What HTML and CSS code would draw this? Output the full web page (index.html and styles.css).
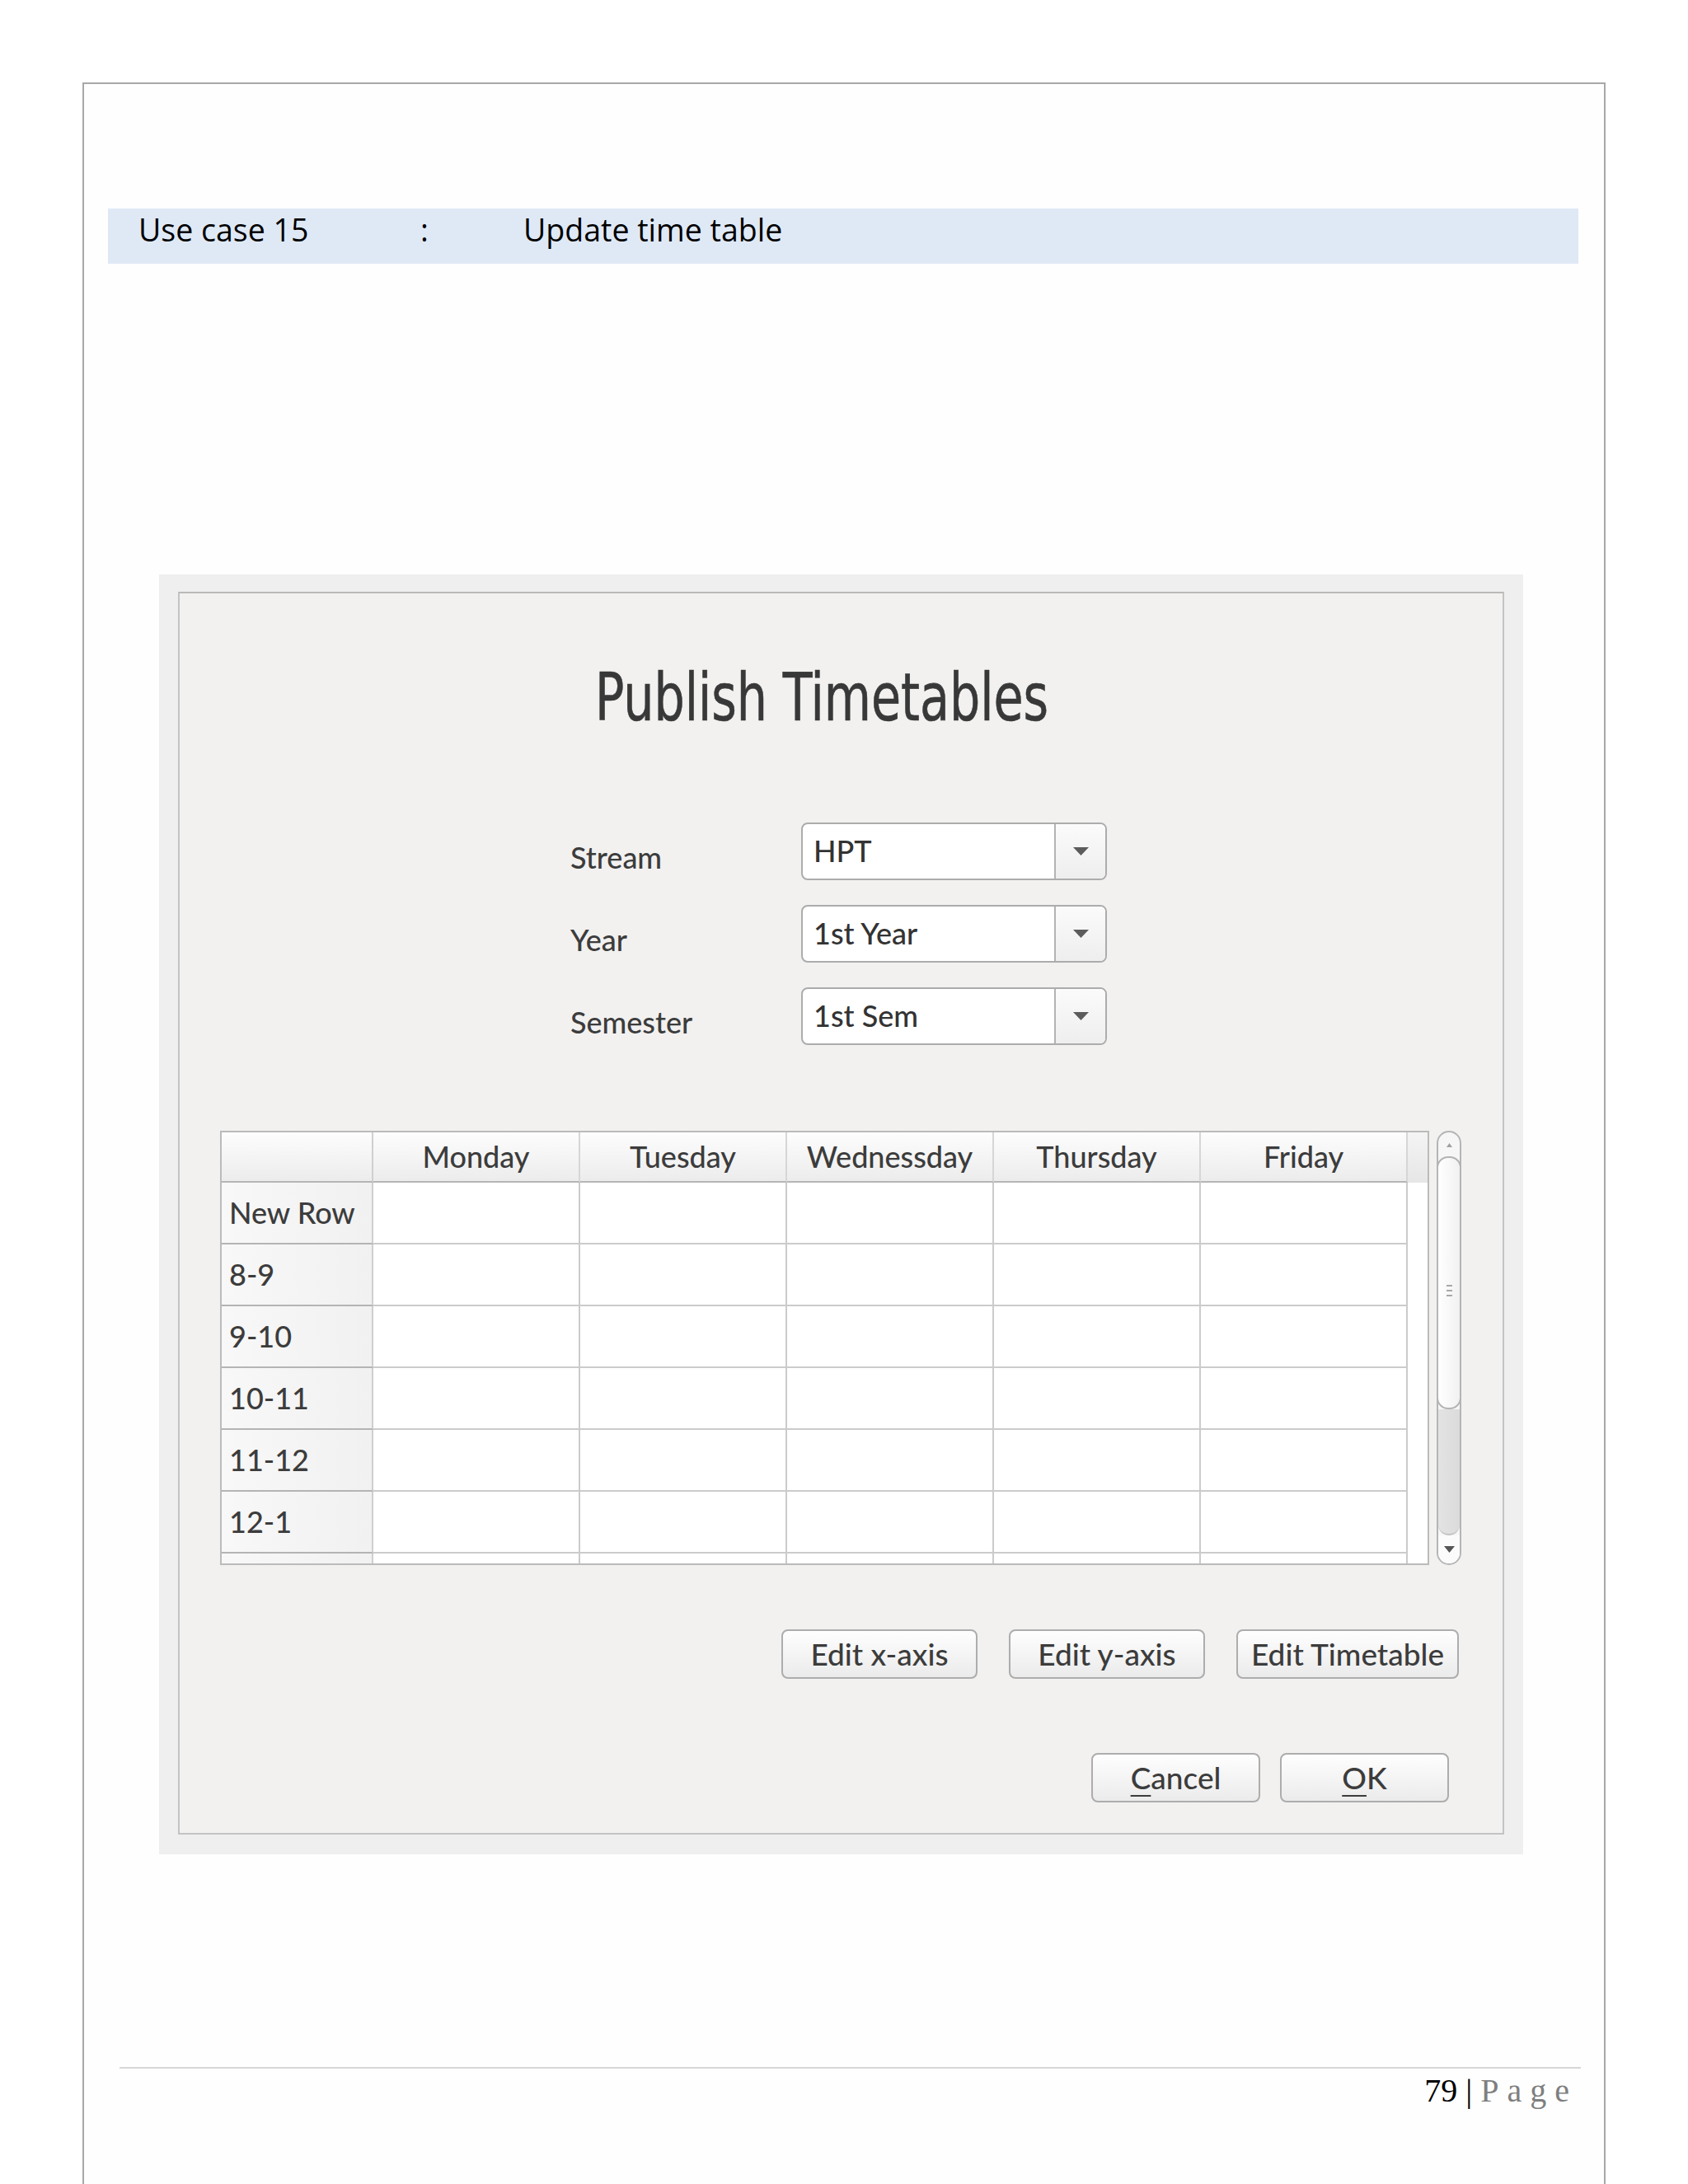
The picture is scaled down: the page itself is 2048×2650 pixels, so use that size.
FILE: index.html
```html
<!DOCTYPE html>
<html>
<head>
<meta charset="utf-8">
<title>Use case 15 - Update time table</title>
<link rel="stylesheet" href="styles.css">
</head>
<body>
<div class="page">
  <div class="band">
    <span class="b-label">Use case 15</span><span class="b-colon">:</span><span class="b-value">Update time table</span>
  </div>

  <div class="shot">
    <div class="panel">
      <h1 class="title"><span class="title-text">Publish Timetables</span></h1>

      <div class="form">
        <div class="label">Stream</div>
        <div class="combo"><span class="combo-text">HPT</span><span class="combo-btn"><svg width="19" height="10" viewBox="0 0 19 10"><polygon points="0,0 19,0 9.5,10" fill="#5c5c5c"/></svg></span></div>
        <div class="label">Year</div>
        <div class="combo"><span class="combo-text">1st Year</span><span class="combo-btn"><svg width="19" height="10" viewBox="0 0 19 10"><polygon points="0,0 19,0 9.5,10" fill="#5c5c5c"/></svg></span></div>
        <div class="label">Semester</div>
        <div class="combo"><span class="combo-text">1st Sem</span><span class="combo-btn"><svg width="19" height="10" viewBox="0 0 19 10"><polygon points="0,0 19,0 9.5,10" fill="#5c5c5c"/></svg></span></div>
      </div>

      <div class="table-area">
        <div class="grid">
          <div class="hc corner"></div>
          <div class="hc">Monday</div>
          <div class="hc">Tuesday</div>
          <div class="hc">Wednessday</div>
          <div class="hc">Thursday</div>
          <div class="hc">Friday</div>
          <div class="hf"></div>

          <div class="rh">New Row</div><div class="c"></div><div class="c"></div><div class="c"></div><div class="c"></div><div class="c"></div><div class="bf"></div>
          <div class="rh">8-9</div><div class="c"></div><div class="c"></div><div class="c"></div><div class="c"></div><div class="c"></div><div class="bf"></div>
          <div class="rh">9-10</div><div class="c"></div><div class="c"></div><div class="c"></div><div class="c"></div><div class="c"></div><div class="bf"></div>
          <div class="rh">10-11</div><div class="c"></div><div class="c"></div><div class="c"></div><div class="c"></div><div class="c"></div><div class="bf"></div>
          <div class="rh">11-12</div><div class="c"></div><div class="c"></div><div class="c"></div><div class="c"></div><div class="c"></div><div class="bf"></div>
          <div class="rh">12-1</div><div class="c"></div><div class="c"></div><div class="c"></div><div class="c"></div><div class="c"></div><div class="bf"></div>
          <div class="rh last"></div><div class="c last"></div><div class="c last"></div><div class="c last"></div><div class="c last"></div><div class="c last"></div><div class="bf"></div>
        </div>

        <div class="sb">
          <div class="sb-up"><svg width="7" height="5" viewBox="0 0 7 5"><polygon points="3.5,0 7,5 0,5" fill="#a0a0a0"/></svg></div>
          <div class="sb-thumb">
            <div class="grip"><span></span><span></span><span></span></div>
          </div>
          <div class="sb-track"></div>
          <div class="sb-down"><svg width="13" height="8" viewBox="0 0 13 8"><polygon points="0,0 13,0 6.5,8" fill="#555"/></svg></div>
        </div>
      </div>

      <div class="btn-row1">
        <div class="btn w238">Edit x-axis</div>
        <div class="btn w238">Edit y-axis</div>
        <div class="btn w270">Edit Timetable</div>
      </div>

      <div class="btn-row2">
        <div class="btn w205"><span class="mn">C</span>ancel</div>
        <div class="btn w205"><span class="mn">O</span>K</div>
      </div>
    </div>
  </div>

  <div class="rule"></div>
  <div class="pnum"><span class="num">79</span> | <span class="pg">Page</span></div>
</div>
</body>
</html>
```

FILE: styles.css
```css
html, body {
  margin: 0;
  padding: 0;
  background: #ffffff;
}

.page {
  margin: 100px 0 0 100px;
  width: 1848px;
  height: 2550px;
  box-sizing: border-box;
  border: 2px solid #a8a8a8;
  border-bottom: none;
  background: #fefefe;
  overflow: hidden;
}

/* header band */
.band {
  margin: 151px 0 0 29px;
  width: 1784px;
  height: 67px;
  box-sizing: border-box;
  padding-left: 37px;
  background: #dfe9f6;
  display: flex;
  font-family: "Open Sans", "Liberation Sans", sans-serif;
  font-size: 37.5px;
  line-height: 51px;
  color: #000;
}
.b-label { width: 342px; }
.b-colon { width: 125px; }

/* screenshot */
.shot {
  margin: 377px 0 0 91px;
  width: 1655px;
  height: 1553px;
  box-sizing: border-box;
  padding: 21px 23px 24px 23px;
  background: #f0efef;
}

.panel {
  height: 1508px;
  box-sizing: border-box;
  border: 2px solid #c3c3c3;
  border-top-color: #b9b9b9;
  background: #f2f1f0;
  font-family: Lato, "Open Sans", sans-serif;
  font-weight: 500;
  color: #3c3c3c;
}

.title {
  margin: 87px 0 0 0;
  padding-left: 504px;
  height: 80px;
  font-family: "Liberation Sans Narrow", "DejaVu Sans Condensed", sans-serif;
  font-weight: normal;
  font-size: 80px;
  line-height: 80px;
  color: #383838;
  white-space: nowrap;
}
.title-text {
  display: inline-block;
  transform: scaleX(0.815);
  transform-origin: left center;
  -webkit-text-stroke: 0.6px #383838;
}

.form {
  margin: 111px 0 0 474px;
  display: grid;
  grid-template-columns: 280px 371px;
  row-gap: 30px;
}
.label {
  font-size: 36px;
  line-height: 70px;
  padding-top: 7px;
  height: 70px;
  box-sizing: border-box;
  color: #3c3c3c;
}
.combo {
  height: 70px;
  box-sizing: border-box;
  border: 2px solid #acacac;
  border-radius: 8px;
  background: #ffffff;
  display: flex;
  overflow: hidden;
}
.combo-text {
  flex: 1;
  padding-left: 13px;
  font-size: 36px;
  line-height: 64px;
  color: #333;
}
.combo-btn {
  width: 60px;
  border-left: 2px solid #b3b3b3;
  background: linear-gradient(#fbfbfb, #eeeeee);
  display: flex;
  align-items: center;
  justify-content: center;
}

/* table */
.table-area {
  margin: 104px 0 0 49px;
  display: flex;
  gap: 9px;
}
.grid {
  width: 1467px;
  height: 527px;
  box-sizing: border-box;
  border: 2px solid #bbbbbb;
  display: grid;
  grid-template-columns: 184px repeat(5, 251px) 24px;
  grid-template-rows: 61px repeat(6, 75px) 12px;
  background: #ffffff;
  overflow: hidden;
}
.hc {
  border-right: 2px solid #d6d6d6;
  border-bottom: 2px solid #b5b5b5;
  background: linear-gradient(#fdfdfd, #ececec);
  font-size: 36px;
  line-height: 59px;
  text-align: center;
  color: #3c3c3c;
}
.hc.corner { border-right-color: #cfcfcf; }
.hf {
  background: linear-gradient(#f4f4f4, #e6e6e6);
}
.rh {
  border-right: 2px solid #cfcfcf;
  border-bottom: 2px solid #b4b4b4;
  background: linear-gradient(90deg, #f8f8f8, #f1f1f1);
  font-size: 36px;
  line-height: 73px;
  padding-left: 9px;
  color: #3c3c3c;
}
.c {
  border-right: 2px solid #cbcbcb;
  border-bottom: 2px solid #cbcbcb;
  background: #ffffff;
}
.rh.last, .c.last { border-bottom: none; }
.bf { background: #ffffff; }

/* scrollbar */
.sb {
  width: 30px;
  height: 527px;
  box-sizing: border-box;
  border: 2px solid #b5b5b5;
  border-radius: 15px;
  background: #f6f6f6;
  display: flex;
  flex-direction: column;
  overflow: hidden;
}
.sb-up {
  height: 29px;
  display: flex;
  align-items: center;
  justify-content: center;
  padding-top: 2px;
  box-sizing: border-box;
}
.sb-thumb {
  height: 307px;
  margin: 0 -2px;
  box-sizing: border-box;
  border: 2px solid #b3b3b3;
  border-radius: 14px;
  background: linear-gradient(90deg, #ffffff, #f1f1f1);
  display: flex;
  align-items: center;
  justify-content: center;
}
.grip {
  display: flex;
  flex-direction: column;
  gap: 4px;
  margin-top: 18px;
}
.grip span {
  display: block;
  width: 7px;
  height: 2px;
  background: #a8a8a8;
}
.sb-track {
  height: 153px;
  background: linear-gradient(90deg, #e4e3e3, #dcdbdb);
  border-radius: 0 0 13px 13px;
  border-bottom: 2px solid #c4c4c4;
  box-sizing: border-box;
}
.sb-down {
  flex: 1;
  display: flex;
  align-items: center;
  justify-content: center;
  background: #fbfbfb;
}

/* buttons */
.btn-row1 {
  margin-top: 78px;
  padding-right: 53px;
  display: flex;
  justify-content: flex-end;
  gap: 38px;
}
.btn-row2 {
  margin-top: 90px;
  padding-right: 65px;
  display: flex;
  justify-content: flex-end;
  gap: 24px;
}
.btn {
  height: 60px;
  box-sizing: border-box;
  border: 2px solid #adadad;
  border-radius: 8px;
  background: linear-gradient(#fefefe, #ebebeb);
  font-size: 37px;
  line-height: 56px;
  text-align: center;
  color: #3c3c3c;
  white-space: nowrap;
}
.w238 { width: 238px; }
.w270 { width: 270px; }
.w205 { width: 205px; }
.mn {
  text-decoration: underline;
  text-decoration-thickness: 2px;
  text-underline-offset: 7px;
}

/* footer */
.rule {
  margin: 258px 0 0 43px;
  width: 1773px;
  border-top: 2px solid #d6d6d6;
}
.pnum {
  margin-top: 3px;
  width: 1816px;
  box-sizing: border-box;
  padding-right: 4px;
  text-align: right;
  font-family: "Liberation Serif", "Times New Roman", serif;
  font-size: 40px;
  line-height: 48px;
  color: #000;
}
.pg {
  color: #7f7f7f;
  letter-spacing: 10px;
}
```
